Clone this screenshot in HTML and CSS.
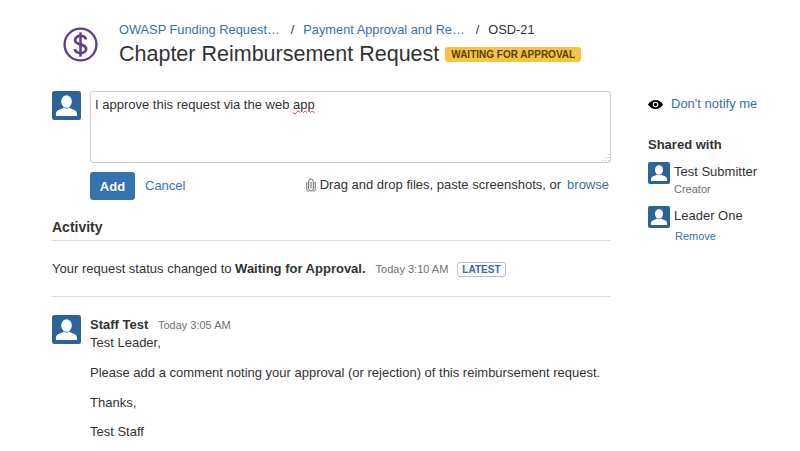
FILE: index.html

```html
<!DOCTYPE html>
<html lang="en">
<head>
    <meta charset="UTF-8">
    <meta name="viewport" content="width=device-width, initial-scale=1.0">
    <title>Chapter Reimbursement Request</title>
    <link rel="stylesheet" href="styles.css">
</head>
<body>

    <!-- Request header -->
    <header class="page-header">
        <svg class="type-icon" viewBox="0 0 36 36" width="35" height="35">
            <circle cx="18" cy="18" r="16.4" fill="none" stroke="#5e3f8f" stroke-width="2.4"/>
            <path d="M23.6 12.800c-.5-2.400-2.800-3.600-5.600-3.600-3.200 0-5.600 1.700-5.600 4.300 0 5.700 11.400 3 11.400 9 0 2.600-2.500 4.300-5.800 4.300-3.100 0-5.400-1.500-5.900-4.100" fill="none" stroke="#5e3f8f" stroke-width="2.800"/>
            <path d="M18 5.500v25" fill="none" stroke="#5e3f8f" stroke-width="2.600"/>
        </svg>
        <div class="header-text">
            <div class="breadcrumbs">
                <a href="#">OWASP Funding Request…</a>
                <span class="sep">/</span>
                <a href="#">Payment Approval and Re…</a>
                <span class="sep">/</span>
                <span class="issue-key">OSD-21</span>
            </div>
            <div class="title-row">
                <h1>Chapter Reimbursement Request</h1>
                <span class="status">Waiting for approval</span>
            </div>
        </div>
    </header>

    <div class="content">
        <main class="main-col">

            <!-- Comment box -->
            <div class="with-avatar">
                <svg class="avatar" viewBox="0 0 29 29" width="29" height="29"><use href="#user"/></svg>
                <div class="comment-form">
                    <div class="textarea">
                        I approve this request via the web <span class="misspelt">app</span>
                        <svg class="grip" viewBox="0 0 9 9" width="9" height="9">
                            <path d="M8 1v1M5 4v1M8 4v1M2 7v1M5 7v1M8 7v1" stroke="#aaa" stroke-width="1"/>
                        </svg>
                    </div>
                    <div class="form-actions">
                        <button class="add-btn" type="button">Add</button>
                        <a class="cancel" href="#">Cancel</a>
                        <div class="attach">
                            <svg viewBox="0 0 10 14" width="10" height="14">
                                <path d="M5 4v6.500M7.300 3.500v7.200a2.300 2.300 0 0 1-4.600 0V3.200a2.300 2.300 0 0 1 4.600 .3M9.200 4v6.700a4.200 4.200 0 0 1-8.400 0V4" fill="none" stroke="#666" stroke-width="1"/>
                            </svg>
                            <span>Drag and drop files, paste screenshots, or</span>
                            <a href="#">browse</a>
                        </div>
                    </div>
                </div>
            </div>

            <!-- Activity -->
            <h2 class="activity-title">Activity</h2>
            <div class="status-change">
                <span>Your request status changed to <b>Waiting for Approval.</b></span>
                <span class="time">Today 3:10 AM</span>
                <span class="latest">Latest</span>
            </div>

            <div class="with-avatar message">
                <svg class="avatar" viewBox="0 0 29 29" width="29" height="29"><use href="#user"/></svg>
                <div class="message-body">
                    <div class="message-head"><b>Staff Test</b> <span class="time">Today 3:05 AM</span></div>
                    <p>Test Leader,</p>
                    <p>Please add a comment noting your approval (or rejection) of this reimbursement request.</p>
                    <p>Thanks,</p>
                    <p>Test Staff</p>
                </div>
            </div>
        </main>

        <aside class="sidebar">
            <div class="notify">
                <svg viewBox="0 0 15 9" width="15" height="9">
                    <path d="M0 4.500C2 1.500 4.500 0 7.500 0s5.500 1.500 7.500 4.500C13 7.500 10.500 9 7.500 9S2 7.500 0 4.500z" fill="#000"/>
                    <circle cx="7.500" cy="4.500" r="2.800" fill="#fff"/>
                    <circle cx="7.500" cy="4.500" r="1.700" fill="#000"/>
                </svg>
                <a href="#">Don't notify me</a>
            </div>
            <h3>Shared with</h3>
            <div class="person">
                <svg class="avatar small" viewBox="0 0 29 29" width="22" height="22"><use href="#user"/></svg>
                <div>
                    <div class="person-name">Test Submitter</div>
                    <div class="person-role">Creator</div>
                </div>
            </div>
            <div class="person">
                <svg class="avatar small" viewBox="0 0 29 29" width="22" height="22"><use href="#user"/></svg>
                <div>
                    <div class="person-name">Leader One</div>
                    <a class="person-remove" href="#">Remove</a>
                </div>
            </div>
        </aside>
    </div>

    <!-- Shared default avatar -->
    <svg class="defs" width="0" height="0">
        <symbol id="user" viewBox="0 0 29 29">
            <rect width="29" height="29" rx="2.500" fill="#2d6398"/>
            <ellipse cx="14.500" cy="10.500" rx="5.300" ry="6.300" fill="#fff"/>
            <path d="M4 25v-2.500c0-2.500 2-3.500 4.500-4.300 1.500-.5 2.500-1 3-1.700 1.800 1.300 4.200 1.300 6 0 .5.700 1.500 1.200 3 1.700 2.500.8 4.500 1.800 4.500 4.300V25z" fill="#fff"/>
        </symbol>
    </svg>

</body>
</html>
```

FILE: styles.css

```css
body {
    font-family: "Liberation Sans", Arial, sans-serif;
    font-size: 13px;
    line-height: 20px;
    color: #333;
    background-color: #fff;
    margin: 0;
    height: 451px;
    overflow: hidden;
}

a {
    color: #3572b0;
    text-decoration: none;
}

.defs {
    display: block;
    height: 0;
}

.page-header {
    display: flex;
    align-items: center;
    padding: 20px 0 0 63px;
}

.type-icon {
    flex: none;
    margin-right: 21px;
}

.breadcrumbs {
    display: flex;
    height: 20px;
    font-size: 12.800px;
}

.sep {
    margin: 0 9px 0 11px;
}

.title-row {
    display: flex;
    align-items: center;
    height: 28px;
}

h1 {
    font-size: 21.500px;
    font-weight: normal;
    line-height: 28px;
    margin: 0 6px 0 0;
}

.status {
    background-color: #f6c342;
    color: #594300;
    font-size: 10px;
    font-weight: bold;
    line-height: 15px;
    text-transform: uppercase;
    padding: 0 6px;
    border-radius: 3px;
}

.content {
    display: flex;
    padding: 23px 0 0 52px;
}

.main-col {
    width: 559px;
    flex: none;
}

.with-avatar {
    display: flex;
}

.avatar {
    flex: none;
    margin-right: 9px;
}

.comment-form {
    flex: 1;
}

.textarea {
    position: relative;
    height: 64px;
    border: 1px solid #ccc;
    border-radius: 3px;
    padding: 3px 4px;
}

.misspelt {
    text-decoration: underline wavy #d33;
    text-decoration-thickness: 1px;
}

.grip {
    position: absolute;
    right: 0;
    bottom: 0;
}

.form-actions {
    display: flex;
    align-items: center;
    margin-top: 9px;
}

.add-btn {
    font-family: inherit;
    font-size: 13px;
    font-weight: bold;
    color: #fff;
    background-color: #3572b0;
    border: none;
    border-radius: 3px;
    width: 45px;
    height: 28px;
    padding: 0;
}

.cancel {
    margin-left: 10px;
}

.attach {
    display: flex;
    align-items: center;
    margin: 0 2px 3px auto;
}

.attach svg {
    margin-right: 4px;
}

.attach a {
    margin-left: 6px;
}

.activity-title {
    font-size: 14px;
    font-weight: bold;
    line-height: 20px;
    margin: 17px 0 0;
    padding-bottom: 3px;
    border-bottom: 1px solid #ddd;
}

.status-change {
    display: flex;
    align-items: center;
    height: 54px;
    padding-top: 1px;
    border-bottom: 1px solid #ddd;
}

.time {
    font-size: 11px;
    color: #707070;
    margin-left: 6px;
}

.status-change .time {
    margin-left: 10px;
}

.latest {
    font-size: 10px;
    font-weight: bold;
    line-height: 13px;
    text-transform: uppercase;
    color: #3b6a99;
    border: 1px solid #a9c1da;
    border-radius: 3px;
    padding: 0 4px;
    margin-left: 9px;
}

.message {
    margin-top: 18px;
}

.message-body {
    flex: 1;
}

.message-head {
    height: 18px;
}

.message-body p {
    margin: 0 0 9.500px;
}

.message-body p:first-of-type {
    margin-bottom: 10px;
}

.sidebar {
    margin-left: 37px;
    flex: 1;
}

.notify {
    display: flex;
    align-items: center;
    height: 26px;
}

.notify svg {
    margin-right: 8px;
}

.sidebar h3 {
    font-size: 13px;
    line-height: 20px;
    margin: 18px 0 7px;
}

.person {
    display: flex;
    margin-bottom: 10px;
}

.avatar.small {
    margin-right: 4px;
}

.person-name {
    line-height: 20px;
}

.person-role {
    font-size: 11px;
    line-height: 14px;
    color: #707070;
}

.person-remove {
    display: block;
    font-size: 11px;
    line-height: 20px;
    margin-left: 1px;
}
```
